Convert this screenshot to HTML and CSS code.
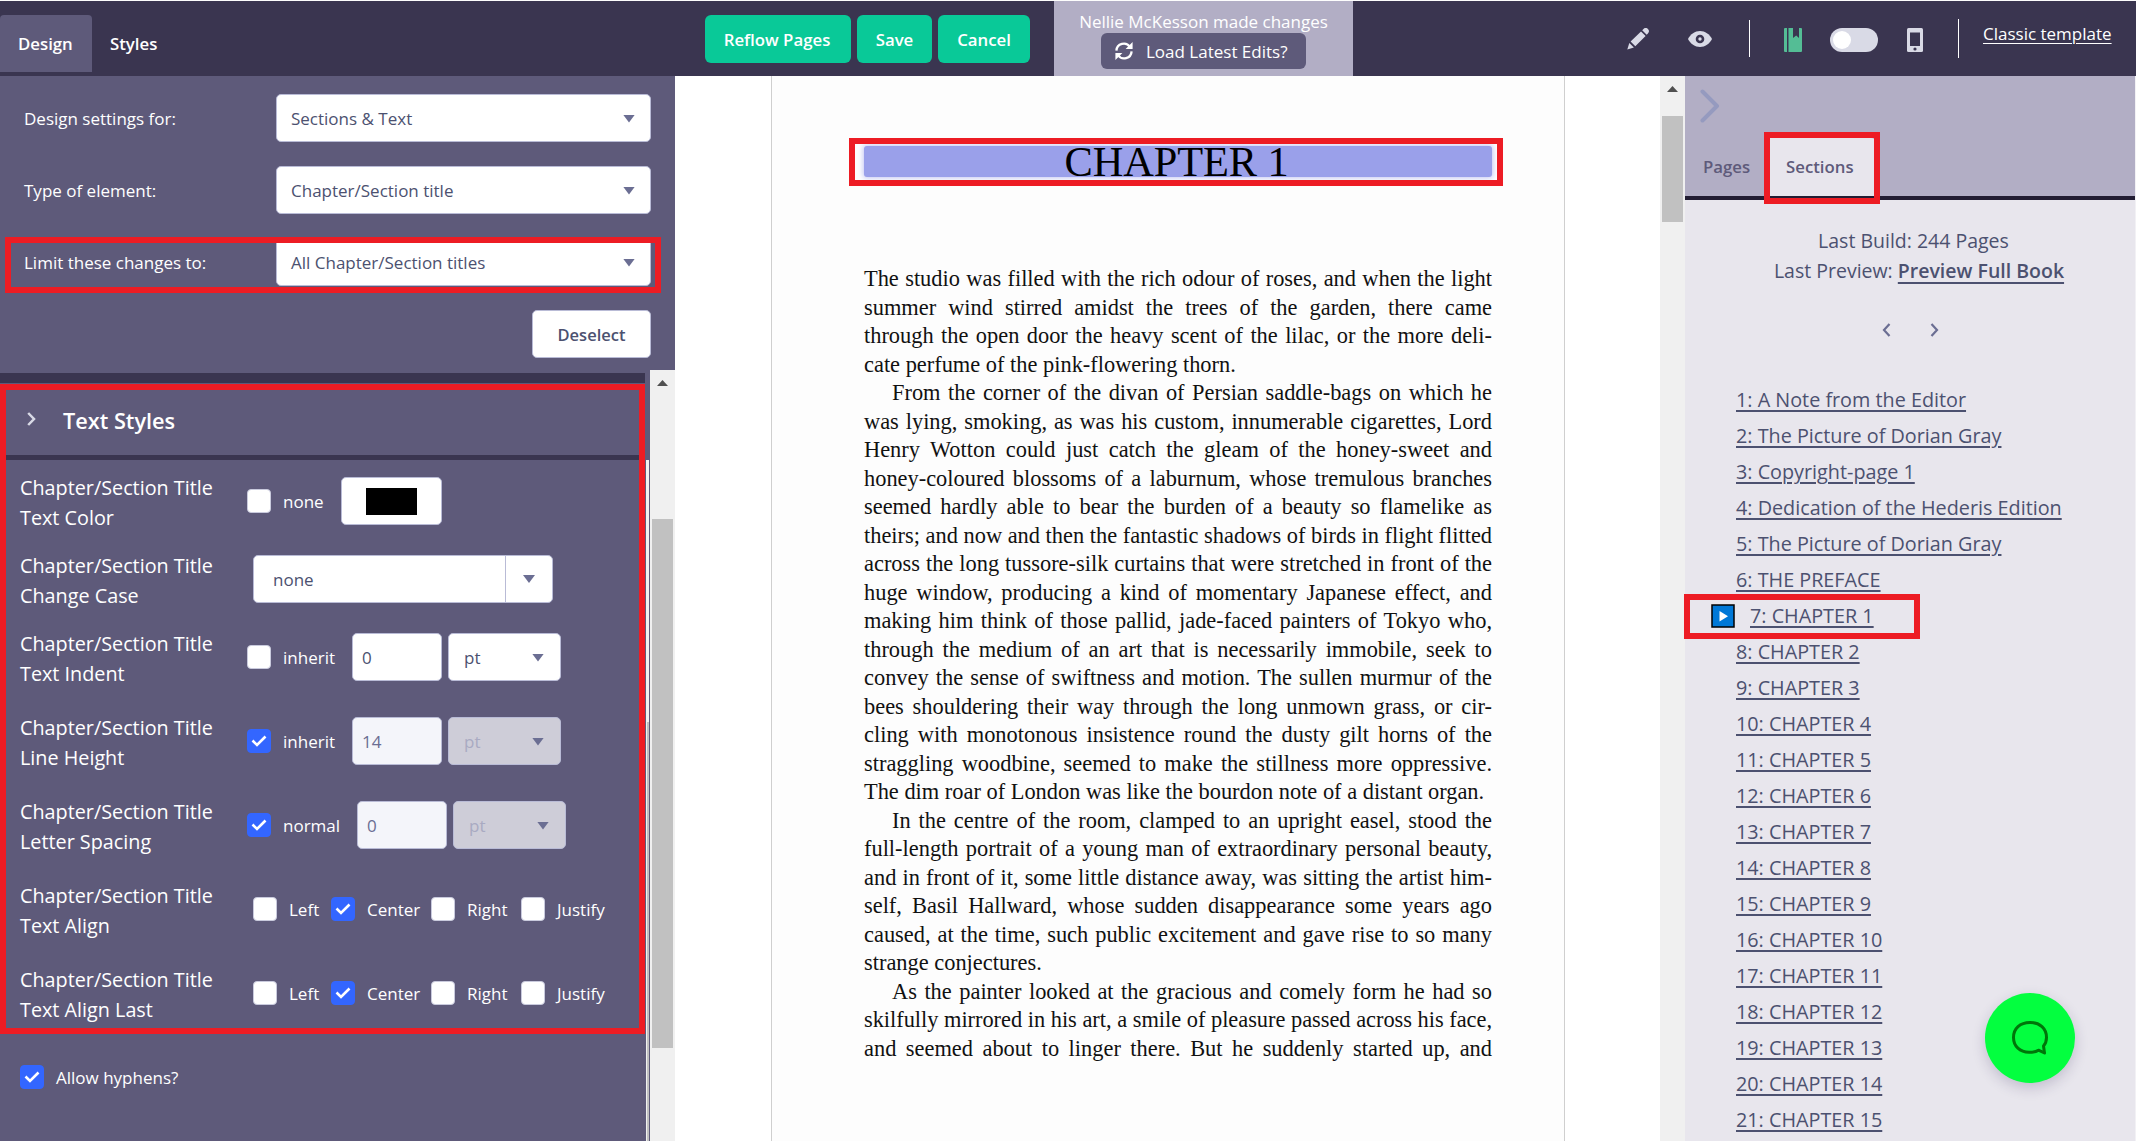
FILE: index.html
```html
<!DOCTYPE html>
<html lang="en">
<head>
<meta charset="utf-8">
<title>Design – Chapter 1</title>
<link rel="stylesheet" href="styles.css">
</head>
<body>
<header class="topbar">
  <nav class="tabs">
    <a class="tab tab-active">Design</a>
    <a class="tab">Styles</a>
  </nav>
  <div class="actions">
    <button class="btn-green btn-reflow">Reflow Pages</button>
    <button class="btn-green btn-save">Save</button>
    <button class="btn-green btn-cancel">Cancel</button>
  </div>
  <div class="notice">
    <span class="notice-text">Nellie McKesson made changes</span>
    <button class="btn-load">
      <svg class="icon-sync" viewBox="0 0 18 18" fill="none" stroke="#fff" stroke-width="2.3"><path d="M1.4 8.6A7.4 7.4 0 0 1 15 5"/><path d="M16.6 9.4A7.4 7.4 0 0 1 3 13"/><path d="M17.6 0v7h-7zM.4 18v-7h7z" fill="#fff" stroke="none"/></svg>
      <span>Load Latest Edits?</span>
    </button>
  </div>
  <div class="tools">
    <svg class="icon-pencil" viewBox="0 0 22 22" fill="#d9dae6"><path d="M.3 21.6l2-6.600 4.600 4.600zM3.600 13.600L14 3.400l4.600 4.600L8.300 18.300zM15.200 2.300l1.300-1.300a3 3 0 0 1 4.400 4.400l-1.200 1.300z"/></svg>
    <svg class="icon-eye" viewBox="0 0 24 16"><path d="M0 8C2.500 3.200 7 0 12 0s9.500 3.200 12 8c-2.500 4.800-7 8-12 8S2.500 12.800 0 8z" fill="#d9dae6"/><circle cx="12" cy="8" r="3" fill="#d9dae6" stroke="#3a3550" stroke-width="2.600"/></svg>
    <i class="rule rule-a"></i>
    <svg class="icon-book" viewBox="0 0 18 24" fill="#54bd95"><path d="M1 0h2v24H1a1 1 0 0 1-1-1V1a1 1 0 0 1 1-1zM4 0h5v10l3.200-2.500L15 10V0h2a1 1 0 0 1 1 1v22a1 1 0 0 1-1 1H4z"/><path d="M4.500 0v24" stroke="#3f7f75" stroke-width="1"/></svg>
    <span class="toggle"><i class="knob"></i></span>
    <svg class="icon-phone" viewBox="0 0 16 24"><rect width="16" height="24" rx="1.500" fill="#d9dae6"/><path d="M3 4.500h10v13.500H3z" fill="#3a3550"/><circle cx="8" cy="21" r="1.600" fill="#3a3550"/></svg>
    <i class="rule rule-b"></i>
    <a class="template-link">Classic template</a>
  </div>
</header>

<main class="workspace">
  <aside class="design">
    <section class="settings">
      <div class="setting"><label>Design settings for:</label><div class="select"><span>Sections &amp; Text</span><i class="caret"></i></div></div>
      <div class="setting"><label>Type of element:</label><div class="select"><span>Chapter/Section title</span><i class="caret"></i></div></div>
      <div class="setting"><label>Limit these changes to:</label><div class="select"><span>All Chapter/Section titles</span><i class="caret"></i></div></div>
      <button class="deselect">Deselect</button>
    </section>
    <section class="styles">
      <div class="styles-body">
        <h2 class="styles-head">
          <svg class="icon-chev" viewBox="0 0 9 14" fill="none" stroke="#d9dae6" stroke-width="2.500"><path d="M1.200 1l5.800 6-5.800 6"/></svg>
          Text Styles
        </h2>
        <div class="rows">
          <div class="row">
            <div class="name">Chapter/Section Title<br>Text Color</div>
            <div class="ctl"><i class="box"></i><span class="opt">none</span><span class="swatch"><i></i></span></div>
          </div>
          <div class="row">
            <div class="name">Chapter/Section Title<br>Change Case</div>
            <div class="ctl inset"><div class="combo"><span>none</span><b><i class="caret"></i></b></div></div>
          </div>
          <div class="row tall">
            <div class="name">Chapter/Section Title<br>Text Indent</div>
            <div class="ctl"><i class="box"></i><span class="opt">inherit</span><span class="num">0</span><span class="unit">pt<i class="caret"></i></span></div>
          </div>
          <div class="row tall">
            <div class="name">Chapter/Section Title<br>Line Height</div>
            <div class="ctl"><i class="box on"><svg viewBox="0 0 16 12"><path d="M1.500 5.500l4.500 4.500L14.500 1.500"/></svg></i><span class="opt">inherit</span><span class="num off">14</span><span class="unit off">pt<i class="caret"></i></span></div>
          </div>
          <div class="row tall">
            <div class="name">Chapter/Section Title<br>Letter Spacing</div>
            <div class="ctl"><i class="box on"><svg viewBox="0 0 16 12"><path d="M1.500 5.500l4.500 4.500L14.500 1.500"/></svg></i><span class="opt wide">normal</span><span class="num off">0</span><span class="unit off">pt<i class="caret"></i></span></div>
          </div>
          <div class="row tall">
            <div class="name">Chapter/Section Title<br>Text Align</div>
            <div class="ctl inset"><i class="box"></i><span class="opt o-left">Left</span><i class="box on"><svg viewBox="0 0 16 12"><path d="M1.500 5.500l4.500 4.500L14.500 1.500"/></svg></i><span class="opt o-center">Center</span><i class="box"></i><span class="opt o-right">Right</span><i class="box"></i><span class="opt">Justify</span></div>
          </div>
          <div class="row tall">
            <div class="name">Chapter/Section Title<br>Text Align Last</div>
            <div class="ctl inset"><i class="box"></i><span class="opt o-left">Left</span><i class="box on"><svg viewBox="0 0 16 12"><path d="M1.500 5.500l4.500 4.500L14.500 1.500"/></svg></i><span class="opt o-center">Center</span><i class="box"></i><span class="opt o-right">Right</span><i class="box"></i><span class="opt">Justify</span></div>
          </div>
          <div class="hyphens"><i class="box on"><svg viewBox="0 0 16 12"><path d="M1.500 5.500l4.500 4.500L14.500 1.500"/></svg></i><span class="opt">Allow hyphens?</span></div>
        </div>
      </div>
      <div class="inner-scroll"></div>
      <div class="scroll scroll-left"><i class="up"></i><i class="thumb"></i></div>
    </section>
  </aside>

  <section class="preview">
    <article class="page">
      <h1 class="chapter">CHAPTER 1</h1>
      <div class="prose">
        <p>The studio was filled with the rich odour of roses, and when the light</p>
        <p>summer wind stirred amidst the trees of the garden, there came</p>
        <p>through the open door the heavy scent of the lilac, or the more deli-</p>
        <p class="last">cate perfume of the pink-flowering thorn.</p>
        <p class="first">From the corner of the divan of Persian saddle-bags on which he</p>
        <p>was lying, smoking, as was his custom, innumerable cigarettes, Lord</p>
        <p>Henry Wotton could just catch the gleam of the honey-sweet and</p>
        <p>honey-coloured blossoms of a laburnum, whose tremulous branches</p>
        <p>seemed hardly able to bear the burden of a beauty so flamelike as</p>
        <p>theirs; and now and then the fantastic shadows of birds in flight flitted</p>
        <p>across the long tussore-silk curtains that were stretched in front of the</p>
        <p>huge window, producing a kind of momentary Japanese effect, and</p>
        <p>making him think of those pallid, jade-faced painters of Tokyo who,</p>
        <p>through the medium of an art that is necessarily immobile, seek to</p>
        <p>convey the sense of swiftness and motion. The sullen murmur of the</p>
        <p>bees shouldering their way through the long unmown grass, or cir-</p>
        <p>cling with monotonous insistence round the dusty gilt horns of the</p>
        <p>straggling woodbine, seemed to make the stillness more oppressive.</p>
        <p class="last">The dim roar of London was like the bourdon note of a distant organ.</p>
        <p class="first">In the centre of the room, clamped to an upright easel, stood the</p>
        <p>full-length portrait of a young man of extraordinary personal beauty,</p>
        <p>and in front of it, some little distance away, was sitting the artist him-</p>
        <p>self, Basil Hallward, whose sudden disappearance some years ago</p>
        <p>caused, at the time, such public excitement and gave rise to so many</p>
        <p class="last">strange conjectures.</p>
        <p class="first">As the painter looked at the gracious and comely form he had so</p>
        <p class="snug">skilfully mirrored in his art, a smile of pleasure passed across his face,</p>
        <p>and seemed about to linger there. But he suddenly started up, and</p>
      </div>
    </article>
    <div class="scroll scroll-page"><i class="up"></i><i class="thumb"></i></div>
  </section>

  <aside class="contents">
    <div class="contents-head">
      <svg class="icon-collapse" viewBox="0 0 20 34" fill="none" stroke="#959abf" stroke-width="4" stroke-linecap="round" stroke-linejoin="round"><path d="M2.500 2.500L17 17 2.500 31.500"/></svg>
      <div class="contents-tabs"><a class="ctab">Pages</a><a class="ctab ctab-active">Sections</a></div>
    </div>
    <div class="build">
      <div>Last Build: 244 Pages</div>
      <div class="build-preview">Last Preview: <a>Preview Full Book</a></div>
    </div>
    <div class="pager">
      <svg viewBox="0 0 9 14"><path d="M7.500 1L2 7l5.500 6"/></svg>
      <svg viewBox="0 0 9 14"><path d="M1.500 1L7 7l-5.500 6"/></svg>
    </div>
    <ul class="toc">
      <li><a>1: A Note from the Editor</a></li>
      <li><a>2: The Picture of Dorian Gray</a></li>
      <li><a>3: Copyright-page 1</a></li>
      <li><a>4: Dedication of the Hederis Edition</a></li>
      <li><a>5: The Picture of Dorian Gray</a></li>
      <li><a>6: THE PREFACE</a></li>
      <li class="current"><svg class="icon-play" viewBox="0 0 24 24"><path d="M1 1h22v22H1z" fill="#0078d7" stroke="#000" stroke-width="1.500"/><path d="M8.500 7v10.500l8.500-5.300z" fill="#fff"/></svg><a>7: CHAPTER 1</a></li>
      <li><a>8: CHAPTER 2</a></li>
      <li><a>9: CHAPTER 3</a></li>
      <li><a>10: CHAPTER 4</a></li>
      <li><a>11: CHAPTER 5</a></li>
      <li><a>12: CHAPTER 6</a></li>
      <li><a>13: CHAPTER 7</a></li>
      <li><a>14: CHAPTER 8</a></li>
      <li><a>15: CHAPTER 9</a></li>
      <li><a>16: CHAPTER 10</a></li>
      <li><a>17: CHAPTER 11</a></li>
      <li><a>18: CHAPTER 12</a></li>
      <li><a>19: CHAPTER 13</a></li>
      <li><a>20: CHAPTER 14</a></li>
      <li><a>21: CHAPTER 15</a></li>
    </ul>
  </aside>
</main>

<div class="chat"><svg viewBox="0 0 36 34" fill="none" stroke="#00760a" stroke-width="3" stroke-linejoin="round"><path d="M26.500 29.200C24 31 21 31.300 17 31.300 8 31 1.500 25.500 1.500 16.500S8 1.500 18 1.500s16.500 6 16.500 15c0 3.500-.8 6-3 8.500l1 7z"/></svg></div>

<div class="mark mark-limit"></div>
<div class="mark mark-styles"></div>
<div class="mark mark-chapter"></div>
<div class="mark mark-sections"></div>
<div class="mark mark-current"></div>
</body>
</html>
```
FILE: styles.css
```css
* { box-sizing: border-box; }
body {
  margin: 0;
  width: 2136px;
  height: 1141px;
  overflow: hidden;
  position: relative;
  display: flex;
  flex-direction: column;
  font: 17px/24px "Open Sans", "Noto Sans", sans-serif;
  color: #fff;
  background: #fff;
}
button { font: inherit; border: 0; padding: 0; margin: 0; }
svg { display: block; flex: none; }
i, b { font-style: normal; font-weight: 400; }

/* Top bar */
.topbar {
  flex: none;
  display: flex;
  align-items: flex-start;
  height: 76px;
  background: #3a3550;
  border-top: 1px solid #fdfdfd;
}
.tabs { display: flex; width: 705px; padding-top: 14px; }
.tab { height: 57px; padding: 0 18px; line-height: 58px; font-size: 16.8px; font-weight: 600; }
.tab-active { width: 92px; background: #5e5a7a; border-radius: 4px 4px 0 0; }
.actions { display: flex; gap: 6px; width: 349px; padding-top: 14px; }
.btn-green { height: 48px; background: #09c998; color: #fff; border-radius: 6px; font-size: 16.8px; font-weight: 600; padding-top: 1px; }
.btn-reflow { width: 146px; padding-right: 2px; }
.btn-save { width: 75px; }
.btn-cancel { width: 92px; }
.notice { width: 299px; height: 75px; background: #b2aec5; display: flex; flex-direction: column; align-items: center; padding-top: 9px; }
.notice-text { line-height: 23px; }
.btn-load { display: flex; align-items: center; gap: 13px; width: 205px; height: 36px; padding-left: 14px; background: #5e5a7a; border-radius: 6px; color: #fff; }
.btn-load span { padding-top: 2px; }
.icon-sync { width: 18px; height: 18px; }
.tools { display: flex; align-items: center; height: 75px; }
.icon-pencil { width: 22px; height: 22px; margin-left: 274px; }
.icon-eye { width: 24px; height: 16px; margin-left: 39px; }
.rule { width: 1px; background: #fff; }
.rule-a { height: 37px; margin-left: 37px; }
.rule-b { height: 39px; margin-left: 35px; }
.icon-book { width: 18px; height: 24px; margin: 2px 0 0 34px; }
.toggle { display: flex; align-items: center; width: 48px; height: 24px; margin: 2px 0 0 28px; padding-left: 3px; border-radius: 12px; background: #d9dae6; }
.knob { width: 18px; height: 18px; border-radius: 50%; background: #fff; }
.icon-phone { width: 16px; height: 24px; margin: 2px 0 0 29px; }
.template-link { margin: 0 0 9px 24px; text-decoration: underline; text-underline-offset: 3px; white-space: nowrap; }

.workspace { flex: 1; min-height: 0; display: flex; }

/* Left panel */
.design { width: 675px; flex: none; display: flex; flex-direction: column; background: #5e5a7a; }
.settings { height: 294px; flex: none; display: flex; flex-direction: column; gap: 24px; padding: 18px 24px 0 24px; }
.setting { display: flex; align-items: center; height: 48px; }
.setting label { width: 252px; padding-top: 2px; }
.select { flex: 1; height: 48px; display: flex; align-items: center; justify-content: space-between; padding: 1px 15px 0 14px; background: #fff; border: 1px solid #b9bbd6; border-radius: 5px; color: #4c5170; }
.caret { width: 12px; height: 8px; background: #6b6e93; clip-path: polygon(0 0, 100% 0, 50% 100%); }
.deselect { align-self: flex-end; width: 119px; height: 48px; background: #fff; border: 1px solid #b9bbd6; border-radius: 5px; color: #4c5170; font-size: 16.5px; font-weight: 600; padding-top: 1px; }
.styles { flex: 1; min-height: 0; display: flex; }
.styles-body { width: 645px; margin-top: 3px; }
.styles-head { margin: 0; display: flex; align-items: center; height: 87px; padding: 4px 0 0 27px; gap: 27px; border-top: 10px solid #3a3550; border-bottom: 5px solid #3a3550; font-size: 21.7px; font-weight: 600; }
.icon-chev { width: 9px; height: 14px; margin-top: -4px; }
.rows { padding: 12.5px 0 0 20px; }
.row { display: flex; height: 78px; align-items: flex-start; }
.row.tall { height: 84px; }
.name { width: 227px; font-size: 19.8px; line-height: 30px; white-space: nowrap; }
.ctl { display: flex; align-items: center; height: 60px; margin-top: -1.5px; }
.inset { padding-left: 6px; }
.box { flex: none; width: 24px; height: 24px; border-radius: 4px; background: #fff; border: 1px solid #c9cadd; margin-right: 12px; display: flex; align-items: center; justify-content: center; }
.box.on { background: #3366ff; border-color: #3366ff; }
.box svg { width: 16px; height: 12px; fill: none; stroke: #fff; stroke-width: 2.6; }
.opt { flex: none; width: 69px; padding-top: 1px; }
.swatch { width: 101px; height: 48px; margin-left: -11px; padding: 10px 0 0 24px; background: #fff; border: 1px solid #b9bbd6; border-radius: 5px; }
.swatch i { display: block; width: 51px; height: 27px; background: #000; }
.combo { width: 300px; height: 48px; display: flex; align-items: center; padding-left: 19px; background: #fff; border: 1px solid #b9bbd6; border-radius: 5px; color: #4c5170; }
.combo span { flex: 1; padding-top: 1px; }
.combo b { width: 47px; height: 46px; border-left: 1px solid #b9bbd6; display: flex; align-items: center; justify-content: center; }
.num { width: 90px; height: 48px; line-height: 47px; padding-left: 9px; background: #fff; border: 1px solid #b9bbd6; border-radius: 5px; color: #4c5170; }
.num.off { background: #f4f5fa; color: #6b6e93; }
.opt.wide { width: 74px; }
.unit { width: 113px; height: 48px; margin-left: 6px; display: flex; align-items: center; justify-content: space-between; padding: 1px 16px 0 15px; background: #fff; border: 1px solid #b9bbd6; border-radius: 5px; color: #4c5170; }
.unit.off { background: #cecdd8; color: #a9aac2; }
.o-left { width: 42px; }
.o-center { width: 64px; }
.o-right { width: 54px; }
.hyphens { display: flex; align-items: center; height: 24px; margin-top: 16.5px; }
.hyphens .opt { width: auto; }
.inner-scroll { width: 5px; padding: 90px 1px 0; }
.inner-scroll::before { content: ""; display: block; width: 3px; height: 681px; background: linear-gradient(#f1f1f1, #f1f1f1) top / 3px 262px no-repeat, linear-gradient(90deg, #f1f1f1 0 1px, #c1c1c1 1px); }
.scroll { width: 25px; background: #f0f0f0; display: flex; flex-direction: column; }
.up { width: 11px; height: 6px; margin: 10px 0 0 7px; background: #505050; clip-path: polygon(50% 0, 100% 100%, 0 100%); }
.thumb { width: 21px; margin-left: 2px; background: #c1c1c1; }
.scroll-left .thumb { height: 529px; margin-top: 133px; }

/* Page preview */
.preview { width: 1010px; flex: none; display: flex; justify-content: space-between; }
.page { width: 794px; margin-left: 96px; padding: 70px 72px 0 92px; border: solid #cfcfcf; border-width: 0 1px; background: #fdfdfd; color: #111; font-family: "Liberation Serif", serif; }
.chapter { margin: 0; height: 31px; border-radius: 3px; background: #9aa0ea; box-shadow: 0 0 5px 1px #c3c6f5; text-align: center; font-size: 42.4px; line-height: 32px; font-weight: 400; color: #000; padding-right: 3px; letter-spacing: -0.1px; }
.prose { padding-top: 88px; font-size: 22.4px; line-height: 28.5px; }
.prose p { margin: 0; white-space: nowrap; text-align: justify; text-align-last: justify; }
.prose .first { padding-left: 28px; }
.prose .last { text-align-last: left; }
.prose .snug { letter-spacing: -0.03px; }
.scroll-page .thumb { height: 106px; margin-top: 24px; }

/* Contents panel */
.contents { flex: 1; background: #e8e6ed; color: #4c5170; border-right: 1px solid #f2f1f5; }
.contents-head { height: 124px; padding: 13px 0 0 15px; background: #b2aec5; border-bottom: 4px solid #221d33; }
.icon-collapse { width: 20px; height: 34px; }
.contents-tabs { display: flex; margin-top: 15px; }
.ctab { width: 70px; height: 58px; line-height: 58px; padding-left: 3px; color: #5e5a7a; font-size: 16.8px; font-weight: 600; }
.ctab-active { width: 105px; padding-left: 16px; background: #e8e6ed; border-radius: 0 4px 0 0; }
.build { padding: 26px 0 0 7px; text-align: center; font-size: 19.5px; line-height: 30px; }
.build-preview { padding-left: 11px; }
.build a { font-weight: 600; text-decoration: underline; text-decoration-thickness: 2px; text-underline-offset: 4px; }
.pager { display: flex; gap: 39px; padding: 37px 0 0 197px; }
.pager svg { width: 9px; height: 14px; fill: none; stroke: #6b6e93; stroke-width: 2.2; }
.toc { list-style: none; margin: 45px 0 0; padding: 0 0 0 51px; font-size: 19.8px; }
.toc li { height: 36px; line-height: 36px; display: flex; align-items: center; white-space: nowrap; }
.toc a { text-decoration: underline; text-decoration-thickness: 2px; text-underline-offset: 3px; }
.toc .current { margin-left: -25px; gap: 15px; }
.icon-play { width: 24px; height: 24px; }

/* Overlays */
.chat { position: absolute; left: 1985px; top: 993px; width: 90px; height: 90px; border-radius: 50%; background: #03ff3f; box-shadow: 0 5px 14px rgba(40, 30, 80, .2); display: flex; align-items: center; justify-content: center; }
.chat svg { width: 36px; height: 34px; }
.mark { position: absolute; border: 6px solid #ed1c24; }
.mark-limit { left: 5px; top: 237px; width: 656px; height: 56px; }
.mark-styles { left: 0; top: 384px; width: 645px; height: 650px; }
.mark-chapter { left: 849px; top: 138px; width: 654px; height: 48px; }
.mark-sections { left: 1764px; top: 132px; width: 116px; height: 72px; }
.mark-current { left: 1684px; top: 594px; width: 236px; height: 45px; }
```
